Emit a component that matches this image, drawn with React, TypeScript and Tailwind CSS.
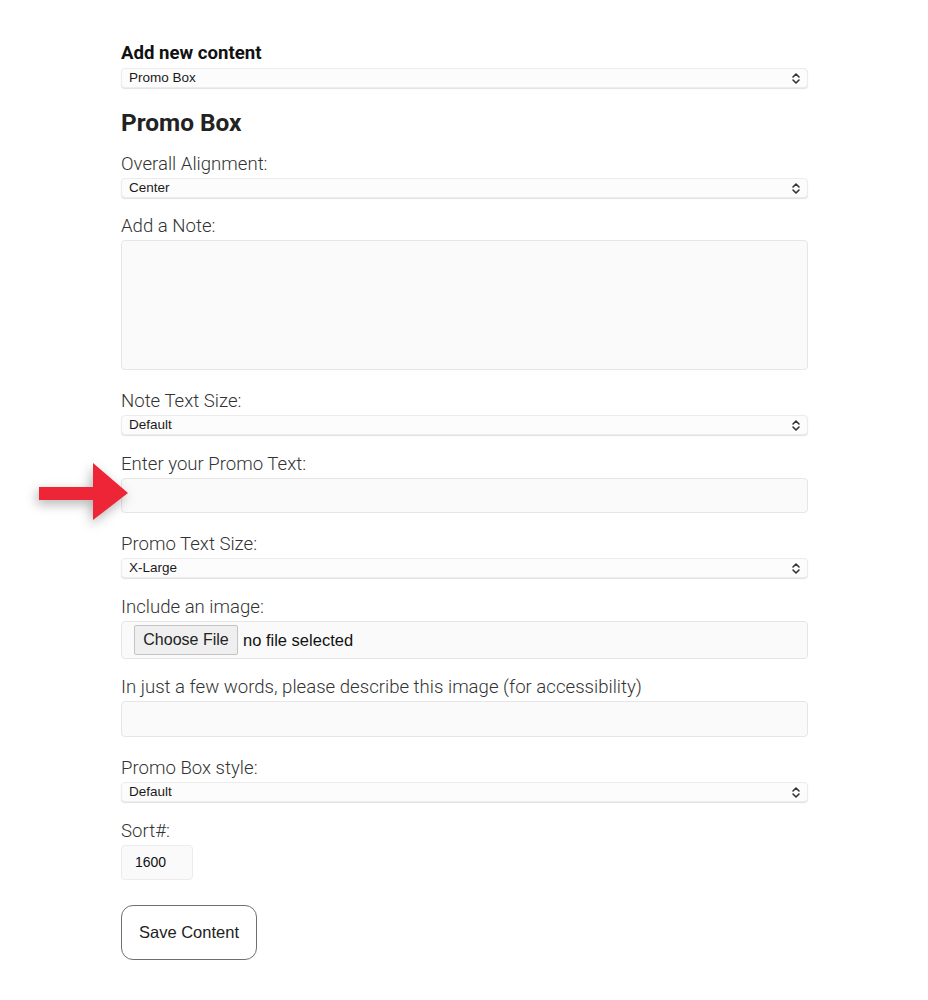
import React from "react";

const labelCls =
  "block text-[18.6px] leading-[22px] font-light text-[#333] font-['Roboto',sans-serif]";
const ctrlText = "font-['Liberation_Sans',Arial,sans-serif]";

function Chevrons() {
  return (
    <svg width="10" height="13" viewBox="0 0 10 13" className="absolute right-[6px] top-[3px]">
      <path d="M2 5 L5 2 L8 5" fill="none" stroke="#333" strokeWidth="1.6" strokeLinecap="round" strokeLinejoin="round" />
      <path d="M2 8 L5 11 L8 8" fill="none" stroke="#333" strokeWidth="1.6" strokeLinecap="round" strokeLinejoin="round" />
    </svg>
  );
}

function Select({ value }: { value: string }) {
  return (
    <div
      className={`relative w-[687px] h-[20px] rounded-[4px] bg-[#fcfcfc] border border-[#ececec] shadow-[0_1px_1px_rgba(0,0,0,0.12)] ${ctrlText} text-[13.5px] leading-[18px] text-[#1a1a1a] pl-[7px]`}
    >
      {value}
      <Chevrons />
    </div>
  );
}

function Field({
  label,
  children,
  mt,
}: {
  label: string;
  children: React.ReactNode;
  mt: string;
}) {
  return (
    <div className={mt}>
      <div className={labelCls}>{label}</div>
      <div className="mt-[3px]">{children}</div>
    </div>
  );
}

function TextBox({ h }: { h: string }) {
  return (
    <div className={`w-[687px] ${h} rounded-[4px] bg-[#fafafa] border border-[#e6e6e6]`} />
  );
}

export default function App() {
  return (
    <div className="relative min-h-[1000px] bg-white">
      <svg
        width="110"
        height="80"
        viewBox="0 0 110 80"
        className="absolute left-[30px] top-[450px]"
        style={{ filter: "drop-shadow(-2px 4px 6px rgba(0,0,0,0.3))" }}
      >
        <polygon points="9,37 63,37 63,13 98,43 63,70 63,50 9,50" fill="#ee2536" />
      </svg>

      <div className="pl-[121px] pt-[42px] pb-[40px]">
        <div className="text-[18.6px] leading-[22px] font-bold text-[#111] font-['Roboto',sans-serif]">
          Add new content
        </div>
        <div className="mt-[4px]">
          <Select value="Promo Box" />
        </div>

        <div className="mt-[21px] text-[24.4px] leading-[28px] font-bold text-[#222] font-['Roboto',sans-serif]">
          Promo Box
        </div>

        <Field label="Overall Alignment:" mt="mt-[16px]">
          <Select value="Center" />
        </Field>

        <Field label="Add a Note:" mt="mt-[17px]">
          <TextBox h="h-[130px]" />
        </Field>

        <Field label="Note Text Size:" mt="mt-[20px]">
          <Select value="Default" />
        </Field>

        <Field label="Enter your Promo Text:" mt="mt-[18px]">
          <TextBox h="h-[35px]" />
        </Field>

        <Field label="Promo Text Size:" mt="mt-[20px]">
          <Select value="X-Large" />
        </Field>

        <Field label="Include an image:" mt="mt-[18px]">
          <div className="w-[687px] h-[38px] rounded-[4px] bg-[#fafafa] border border-[#e6e6e6] flex items-center pl-[12px]">
            <div
              className={`h-[30px] w-[104px] bg-[#efefef] border border-[#c4c4c4] rounded-[2px] flex items-center justify-center text-[16px] text-[#222] ${ctrlText}`}
            >
              Choose File
            </div>
            <span className={`ml-[5px] text-[16.5px] text-[#111] ${ctrlText}`}>no file selected</span>
          </div>
        </Field>

        <Field
          label="In just a few words, please describe this image (for accessibility)"
          mt="mt-[17px]"
        >
          <TextBox h="h-[36px]" />
        </Field>

        <Field label="Promo Box style:" mt="mt-[20px]">
          <Select value="Default" />
        </Field>

        <Field label="Sort#:" mt="mt-[18px]">
          <div
            className={`w-[72px] h-[35px] rounded-[4px] bg-[#fafafa] border border-[#ececec] flex items-center pl-[13px] text-[14px] text-[#111] ${ctrlText}`}
          >
            1600
          </div>
        </Field>

        <div
          className={`mt-[25px] w-[136px] h-[55px] rounded-[12px] border-[1.5px] border-[#6f6f6f] bg-white flex items-center justify-center text-[16.5px] text-[#222] ${ctrlText}`}
        >
          Save Content
        </div>
      </div>
    </div>
  );
}
